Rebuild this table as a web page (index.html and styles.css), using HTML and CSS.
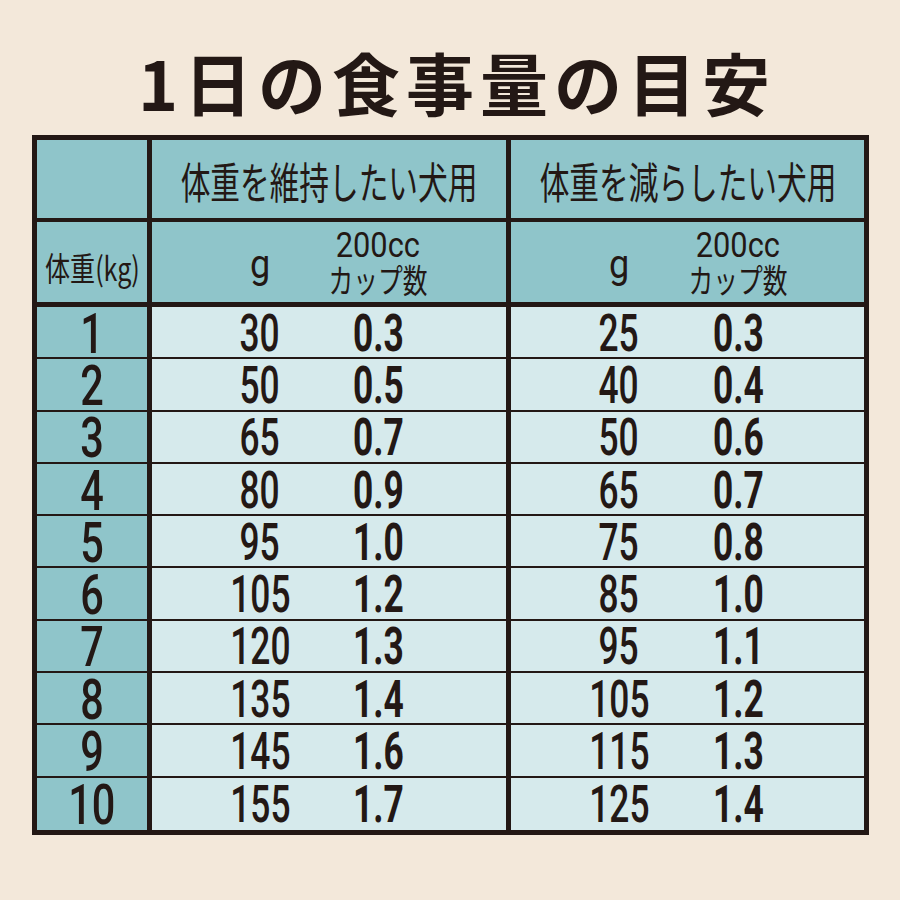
FILE: index.html
```html
<!DOCTYPE html>
<html lang="ja">
<head>
<meta charset="utf-8">
<title>1日の食事量の目安</title>
<link rel="stylesheet" href="styles.css">
</head>
<body>
<h1 class="title">1日の食事量の目安</h1>
<div class="chart">
  <div class="cell corner head1"></div>
  <div class="cell sec head1 sec-left"><span class="jp-head">体重を維持したい犬用</span></div>
  <div class="cell sec head1"><span class="jp-head">体重を減らしたい犬用</span></div>

  <div class="cell corner head2"><span class="kg">体重(kg)</span></div>
  <div class="cell gcol head2"><span class="unit-g">g</span></div>
  <div class="cell cupcol head2 sec-left"><span class="cup"><span class="cc">200cc</span><span class="cupjp">カップ数</span></span></div>
  <div class="cell gcol head2"><span class="unit-g">g</span></div>
  <div class="cell cupcol cupcol-r head2"><span class="cup"><span class="cc">200cc</span><span class="cupjp">カップ数</span></span></div>

  <div class="cell wt"><span class="n">1</span></div><div class="cell gcol body"><span class="g">30</span></div><div class="cell cupcol body sec-left"><span class="c">0.3</span></div><div class="cell gcol body"><span class="g">25</span></div><div class="cell cupcol cupcol-r body"><span class="c">0.3</span></div>
  <div class="cell wt"><span class="n">2</span></div><div class="cell gcol body"><span class="g">50</span></div><div class="cell cupcol body sec-left"><span class="c">0.5</span></div><div class="cell gcol body"><span class="g">40</span></div><div class="cell cupcol cupcol-r body"><span class="c">0.4</span></div>
  <div class="cell wt"><span class="n">3</span></div><div class="cell gcol body"><span class="g">65</span></div><div class="cell cupcol body sec-left"><span class="c">0.7</span></div><div class="cell gcol body"><span class="g">50</span></div><div class="cell cupcol cupcol-r body"><span class="c">0.6</span></div>
  <div class="cell wt"><span class="n">4</span></div><div class="cell gcol body"><span class="g">80</span></div><div class="cell cupcol body sec-left"><span class="c">0.9</span></div><div class="cell gcol body"><span class="g">65</span></div><div class="cell cupcol cupcol-r body"><span class="c">0.7</span></div>
  <div class="cell wt"><span class="n">5</span></div><div class="cell gcol body"><span class="g">95</span></div><div class="cell cupcol body sec-left"><span class="c">1.0</span></div><div class="cell gcol body"><span class="g">75</span></div><div class="cell cupcol cupcol-r body"><span class="c">0.8</span></div>
  <div class="cell wt"><span class="n">6</span></div><div class="cell gcol body"><span class="g">105</span></div><div class="cell cupcol body sec-left"><span class="c">1.2</span></div><div class="cell gcol body"><span class="g">85</span></div><div class="cell cupcol cupcol-r body"><span class="c">1.0</span></div>
  <div class="cell wt"><span class="n">7</span></div><div class="cell gcol body"><span class="g">120</span></div><div class="cell cupcol body sec-left"><span class="c">1.3</span></div><div class="cell gcol body"><span class="g">95</span></div><div class="cell cupcol cupcol-r body"><span class="c">1.1</span></div>
  <div class="cell wt"><span class="n">8</span></div><div class="cell gcol body"><span class="g">135</span></div><div class="cell cupcol body sec-left"><span class="c">1.4</span></div><div class="cell gcol body"><span class="g">105</span></div><div class="cell cupcol cupcol-r body"><span class="c">1.2</span></div>
  <div class="cell wt"><span class="n">9</span></div><div class="cell gcol body"><span class="g">145</span></div><div class="cell cupcol body sec-left"><span class="c">1.6</span></div><div class="cell gcol body"><span class="g">115</span></div><div class="cell cupcol cupcol-r body"><span class="c">1.3</span></div>
  <div class="cell wt last"><span class="n">10</span></div><div class="cell gcol body last"><span class="g">155</span></div><div class="cell cupcol body sec-left last"><span class="c">1.7</span></div><div class="cell gcol body last"><span class="g">125</span></div><div class="cell cupcol cupcol-r body last"><span class="c">1.4</span></div>
</div>
</body>
</html>
```
FILE: styles.css
```css
* { box-sizing: border-box; }
html, body {
  margin: 0;
  padding: 0;
  background: #f3e8da;
}
body {
  width: 900px;
  height: 900px;
  padding-top: 44px;
  font-family: "Noto Sans CJK JP", "Noto Sans", sans-serif;
  color: #231815;
}
.title {
  margin: 0 0 15px 0;
  height: 76px;
  line-height: 76px;
  text-align: center;
  font-size: 68px;
  font-weight: 700;
  letter-spacing: 6px;
  padding-left: 14px;
  color: #231815;
}
.chart {
  margin-left: 32px;
  width: 837px;
  height: 700px;
  border: 5px solid #231815;
  display: grid;
  grid-template-columns: 115px 168px 191px 168px 185px;
  grid-template-rows: 82px 85px repeat(10, minmax(0, 1fr));
  background: #d6eaec;
}
.cell {
  display: flex;
  align-items: center;
  justify-content: center;
  min-height: 0;
  overflow: visible;
  white-space: nowrap;
}
.corner, .wt {
  background: #8fc5ca;
  border-right: 5px solid #231815;
}
.head1 {
  background: #8fc5ca;
  border-bottom: 4px solid #231815;
}
.head2 {
  background: #8fc5ca;
  border-bottom: 5px solid #231815;
}
.sec { grid-column: span 2; }
.sec-left { border-right: 5px solid #231815; }
.body, .wt { border-bottom: 2px solid #231815; }
.last { border-bottom: none; }
.wt { background: #8fc5ca; }
.body { background: #d6eaec; }

.gcol { padding-left: 48px; }
.cupcol { padding-right: 70px; }
.cupcol-r { padding-right: 67px; }

.jp-head {
  display: inline-block;
  font-size: 43px;
  transform: scaleX(0.69);
  padding-top: 2px;
}
.kg {
  display: inline-block;
  font-size: 33px;
  transform: scaleX(0.76);
  padding-top: 10px;
}
.unit-g {
  display: inline-block;
  font-family: Roboto, "Noto Sans", sans-serif;
  font-size: 40px;
  transform: scaleX(0.9);
  padding-top: 4px;
}
.cup {
  display: flex;
  flex-direction: column;
  align-items: center;
  padding-top: 4px;
}
.cc {
  display: block;
  font-family: Roboto, "Noto Sans", sans-serif;
  font-size: 35px;
  line-height: 30px;
  transform: scaleX(0.88);
}
.cupjp {
  display: block;
  font-size: 33px;
  line-height: 36px;
  transform: scaleX(0.75);
}
.n, .g, .c {
  display: inline-block;
  font-family: Roboto, "Noto Sans", sans-serif;
  line-height: 44px;
  padding-top: 3px;
}
.n {
  font-size: 56px;
  font-weight: 500;
  transform: scaleX(0.74);
}
.g {
  font-size: 52px;
  font-weight: 500;
  transform: scaleX(0.68);
}
.c {
  font-size: 52px;
  font-weight: 700;
  transform: scaleX(0.68);
}
```
